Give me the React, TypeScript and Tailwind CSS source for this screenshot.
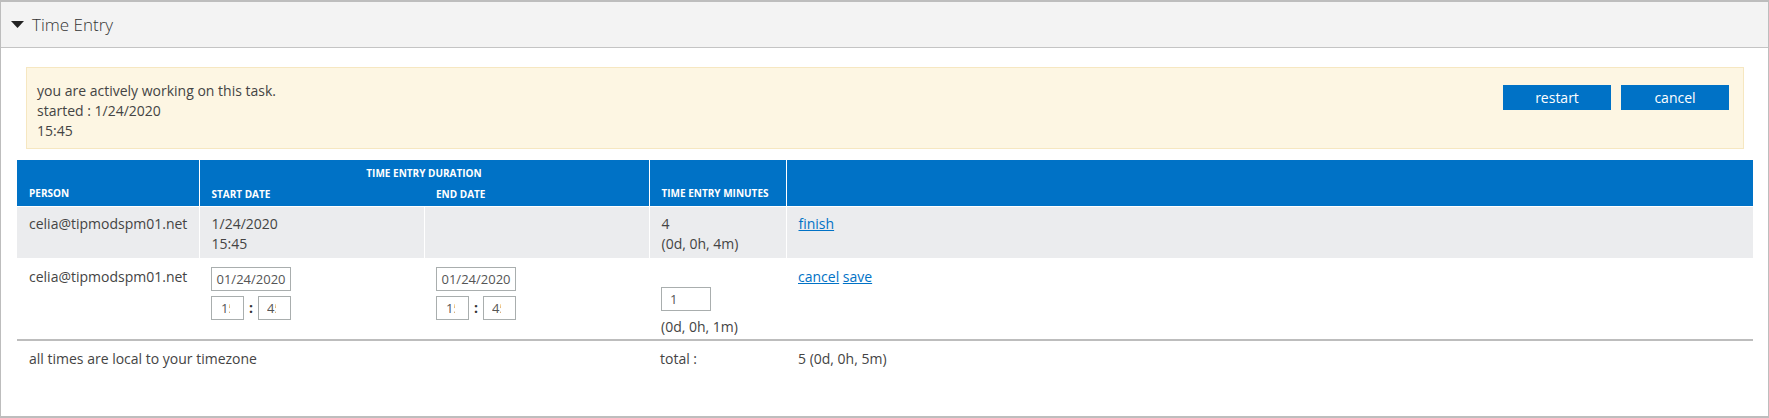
import React from "react";

const inputCls =
  "h-[24px] border border-[#a9aeae] bg-white text-[13px] text-[#555] outline-none font-['Open_Sans',sans-serif]";

function DateTimeInputs() {
  return (
    <div className="flex flex-col gap-[5px] w-[80px]">
      <input className={`${inputCls} w-[80px] text-center px-0`} defaultValue="01/24/2020" readOnly />
      <div className="flex items-center justify-between w-[80px]">
        <input className={`${inputCls} w-[33px] pl-[9px] pr-[13px]`} defaultValue="15" readOnly />
        <span className="font-bold text-[#333] text-[14px] leading-none">:</span>
        <input className={`${inputCls} w-[33px] pl-[8px] pr-[14px]`} defaultValue="45" readOnly />
      </div>
    </div>
  );
}

export default function App() {
  return (
    <div className="w-[1769px] h-[418px] bg-white font-['Open_Sans',sans-serif] text-[#444]">
      <div className="h-[418px] border-l border-r border-t-2 border-b-2 border-[#bdbdbd] flex flex-col">
        <div className="h-[46px] bg-[#f3f3f3] border-b border-[#c4c4c4] flex items-center pl-[10px] shrink-0">
          <svg width="13" height="7" viewBox="0 0 13 7" className="mr-[8px]">
            <path d="M0 0 L13 0 L6.5 7 Z" fill="#222" />
          </svg>
          <span className="text-[17px] font-light text-[#333] leading-none">Time Entry</span>
        </div>

        <div className="flex-1 pt-[19px]">
          <div className="ml-[25px] mr-[24px] h-[82px] bg-[#fdf6e3] border border-[#f6e7c1] flex justify-between">
            <div className="pl-[10px] pt-[13px] text-[14px] leading-5 text-[#444]">
              <div>you are actively working on this task.</div>
              <div>started : 1/24/2020</div>
              <div>15:45</div>
            </div>
            <div className="flex gap-[10px] pt-[17px] pr-[14px]">
              <button className="w-[108px] h-[25px] bg-[#0072c6] text-white text-[14px] leading-none">restart</button>
              <button className="w-[108px] h-[25px] bg-[#0072c6] text-white text-[14px] leading-none">cancel</button>
            </div>
          </div>

          <table className="mt-[11px] ml-[16px] w-[1736px] table-fixed border-collapse text-[14px] leading-5">
            <colgroup>
              <col className="w-[182px]" />
              <col className="w-[225px]" />
              <col className="w-[225px]" />
              <col className="w-[137px]" />
              <col />
            </colgroup>
            <thead>
              <tr className="h-[23px] bg-[#0072c6] text-white text-[10px] font-bold uppercase leading-none">
                <th rowSpan={2} className="align-bottom text-left pl-[12px] pb-[8px] border-r border-white border-b">
                  Person
                </th>
                <th colSpan={2} className="text-center align-middle pt-[2px]">
                  Time Entry Duration
                </th>
                <th rowSpan={2} className="align-bottom text-left pl-[12px] pb-[8px] border-l border-r border-white border-b">
                  Time Entry Minutes
                </th>
                <th rowSpan={2} className="border-l border-white border-b"></th>
              </tr>
              <tr className="h-[23px] bg-[#0072c6] text-white text-[10px] font-bold uppercase leading-none">
                <th className="text-left pl-[12px] align-middle border-b border-white">Start Date</th>
                <th className="text-left pl-[12px] align-middle border-b border-white">End Date</th>
              </tr>
            </thead>
            <tbody>
              <tr className="h-[52px] bg-[#ebecee] align-top">
                <td className="pl-[12px] pt-[7px] border-r border-white">celia@tipmodspm01.net</td>
                <td className="pl-[12px] pt-[7px] border-r border-white">
                  <div>1/24/2020</div>
                  <div>15:45</div>
                </td>
                <td className="pl-[12px] pt-[7px] border-r border-white"></td>
                <td className="pl-[12px] pt-[7px] border-r border-white">
                  <div>4</div>
                  <div>(0d, 0h, 4m)</div>
                </td>
                <td className="pl-[12px] pt-[7px]">
                  <a href="#" className="text-[#0072c6] underline">finish</a>
                </td>
              </tr>
              <tr className="h-[82px] align-top border-b-2 border-[#bdbdbd]">
                <td className="pl-[12px] pt-[9px]">celia@tipmodspm01.net</td>
                <td className="pl-[12px] pt-[9px]">
                  <DateTimeInputs />
                </td>
                <td className="pl-[12px] pt-[9px]">
                  <DateTimeInputs />
                </td>
                <td className="pl-[12px] pt-[29px]">
                  <input className={`${inputCls} w-[50px] pl-[8px] pr-[4px]`} defaultValue="1" readOnly />
                  <div className="mt-[6px]">(0d, 0h, 1m)</div>
                </td>
                <td className="pl-[12px] pt-[9px]">
                  <a href="#" className="text-[#0072c6] underline">cancel</a>{" "}
                  <a href="#" className="text-[#0072c6] underline">save</a>
                </td>
              </tr>
              <tr className="align-top">
                <td colSpan={3} className="pl-[12px] pt-[8px]">all times are local to your timezone</td>
                <td className="pl-[11px] pt-[8px]">total :</td>
                <td className="pl-[12px] pt-[8px]">5 (0d, 0h, 5m)</td>
              </tr>
            </tbody>
          </table>
        </div>
      </div>
    </div>
  );
}
